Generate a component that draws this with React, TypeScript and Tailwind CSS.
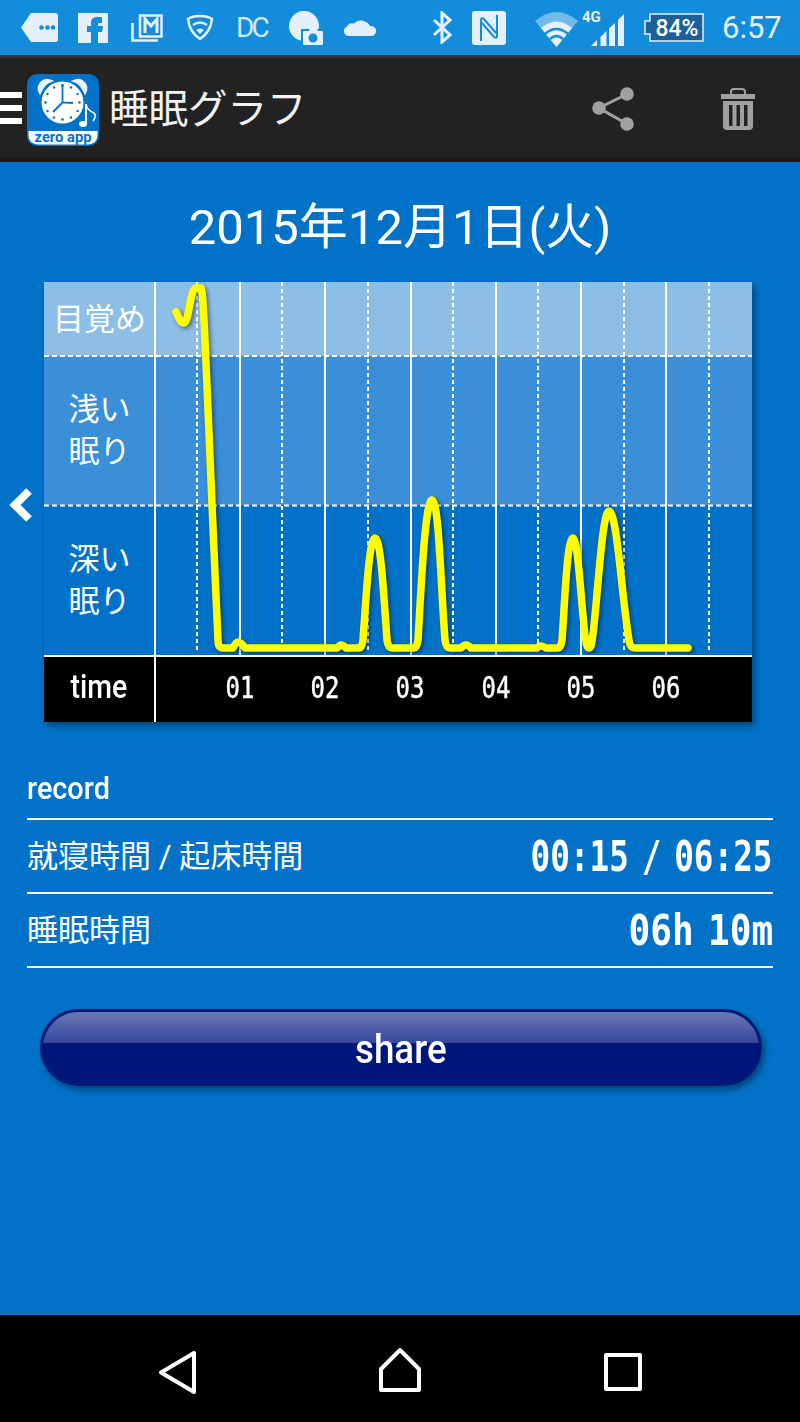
const statusIcon = '#e4f1fb';
const statusBg = '#148cdc';

const solidLines = [240, 325, 411, 496, 581, 666];
const dashedLines = [197, 282, 368, 453, 538, 624, 709];
const hours = ['01', '02', '03', '04', '05', '06'];

// sleep curve, in page coordinates (see viewBox on the svg)
const curve =
  'M176 312 C179 317 180 323 184 323 C189 323 190 288 196 288 L201 288 C204 288 207 400 218 640 Q218 648 223 648 L233 648 Q236 642 238 642 Q241 642 245 648 L337 648 Q340 645 341 645 Q343 645 346 648 L359 648 Q362 648 363 640 C366 600 369 538 375 538 C381 538 384 600 387 640 Q388 648 392 648 L414 648 Q417 648 418 640 C421 590 425 500 432 500 C439 500 441 590 445 640 Q446 648 450 648 L461 648 Q464 645 466 645 Q468 645 471 648 L537 648 Q539 646 541 646 Q543 646 546 648 L558 648 Q561 648 562 640 C565 600 567 538 573 538 C579 538 583 640 587 646 Q589 650 591 646 C596 630 601 511 609 511 C617 511 622 600 629 640 Q630 648 635 648 L688 648';

function StatusBar() {
  return (
    <div className="flex h-[55px] shrink-0 items-center bg-[#148cdc] text-[#e4f1fb]">
      <svg className="ml-[21px]" width="37" height="29" viewBox="0 0 37 29">
        <path d="M10 0H34a3 3 0 0 1 3 3V26a3 3 0 0 1-3 3H10L0 14.500Z" fill={statusIcon} />
        <circle cx="20.500" cy="14.500" r="2.300" fill={statusBg} />
        <circle cx="26.500" cy="14.500" r="2.300" fill={statusBg} />
        <circle cx="32" cy="14.500" r="2.300" fill={statusBg} />
      </svg>
      <svg className="ml-[20px]" width="30" height="30" viewBox="0 0 30 30">
        <rect width="30" height="30" fill={statusIcon} />
        <path d="M13 30V19H9V13H13V10Q13 4 19 4H24V10H21Q20 10 20 11V13H25L24 19H20V30Z" fill={statusBg} />
      </svg>
      <svg className="ml-[23px]" width="32" height="28" viewBox="0 0 32 28" fill="none" stroke={statusIcon}>
        <path d="M1.500 9V26.500H27" strokeWidth="2.500" />
        <rect x="9" y="1.500" width="21.500" height="21" strokeWidth="2.500" />
        <path d="M14 19V5L20 12L26 5V19" strokeWidth="3" />
      </svg>
      <svg className="ml-[23px]" width="28" height="27" viewBox="0 0 28 27" fill="none" stroke={statusIcon}>
        <path d="M14 2C9 2 5 3 2 5C3 14 8 21 14 25C20 21 25 14 26 5C23 3 19 2 14 2Z" strokeWidth="2.500" />
        <path d="M7 11Q14 6 21 11" strokeWidth="2.500" />
        <path d="M10 16Q14 13 18 16L14 20Z" fill={statusIcon} stroke="none" />
      </svg>
      <span className="ml-[22px] w-[34px] text-[28px] leading-none font-normal tracking-[-3px] text-[#d5e9f8]">DC</span>
      <svg className="ml-[19px]" width="35" height="36" viewBox="0 0 35 36">
        <circle cx="15" cy="16" r="15" fill={statusIcon} />
        <rect x="12" y="19" width="23" height="17" fill={statusBg} />
        <path d="M16 21H20L21 19H28L29 21H33Q34 21 34 22V34Q34 35 33 35H15Q14 35 14 34V22Q14 21 16 21Z" fill={statusIcon} />
        <circle cx="24" cy="28" r="4.500" fill={statusBg} />
      </svg>
      <svg className="ml-[19px]" width="34" height="17" viewBox="0 0 34 17">
        <path d="M5 17A5 5 0 0 1 4 7.500A6 6 0 0 1 11 4.500A10 10 0 0 1 27 7A5 5 0 0 1 29 17Z" fill={statusIcon} />
      </svg>
      <svg className="ml-[55px]" width="20" height="33" viewBox="0 0 20 33" fill="none" stroke={statusIcon} strokeWidth="3">
        <path d="M2 9L18 24L10 31V2L18 9L2 24" />
      </svg>
      <svg className="ml-[20px]" width="34" height="34" viewBox="0 0 34 34">
        <rect width="34" height="34" rx="3" fill={statusIcon} />
        <g fill="none" stroke={statusBg} strokeWidth="2">
          <path d="M9 30V9Q9 6 12 8L24 22" />
          <path d="M25 4V25Q25 28 22 26L10 12" />
        </g>
      </svg>
      <svg className="ml-[29px] mt-[4px]" width="43" height="35" viewBox="0 0 43 35">
        <path d="M0 9Q21.500 -9 43 9L21.500 35Z" fill={statusIcon} opacity="0.45" />
        <path d="M6 16Q21.500 3 37 16L21.500 35Z" fill={statusIcon} />
        <path d="M10 22Q21.500 12 33 22" fill="none" stroke={statusBg} strokeWidth="2.500" />
        <path d="M15 27Q21.500 21 28 27" fill="none" stroke={statusBg} strokeWidth="2.500" />
      </svg>
      <svg className="ml-[4px] mt-[-1px]" width="43" height="37" viewBox="0 0 43 37" fill={statusIcon}>
        <text x="0" y="13" fontSize="15" fontWeight="700" fontFamily="Roboto, sans-serif">4G</text>
        <path d="M9 37L15 31V37Z" />
        <path d="M18.500 28L24.500 22V37H18.500Z" />
        <path d="M27 19.500L33 14V37H27Z" />
        <path d="M36 11L42 5V37H36Z" />
      </svg>
      <svg className="ml-[19px]" width="60" height="29" viewBox="0 0 60 29">
        <path d="M6 1H59V28H6V21H1V8H6Z" fill="#1a6099" stroke={statusIcon} strokeWidth="1.500" />
        <text x="33" y="22.500" textAnchor="middle" fontSize="23" fontWeight="500" fill="#ffffff" fontFamily="Roboto, sans-serif">84%</text>
      </svg>
      <span className="ml-[18px] text-[31px] leading-none">6:57</span>
    </div>
  );
}

function AppLogo() {
  return (
    <svg width="72" height="72" viewBox="0 0 72 72">
      <rect width="72" height="72" rx="10" fill="#0272c9" />
      <path d="M1.500 57H70.500V60Q70.500 70.500 60 70.500H12Q1.500 70.500 1.500 60Z" fill="#ffffff" />
      <text x="36" y="68" textAnchor="middle" textLength="57" lengthAdjust="spacingAndGlyphs" fontSize="15" fontWeight="700" fill="#0272c9" fontFamily="Roboto, sans-serif">zero app</text>
      <path d="M13 18A8 8 0 0 1 23 7Q17 9 13 18Z" fill="#e8f2fa" stroke="#e8f2fa" strokeWidth="3" />
      <path d="M58 18A8 8 0 0 0 48 7Q54 9 58 18Z" fill="#e8f2fa" stroke="#e8f2fa" strokeWidth="3" />
      <circle cx="35.500" cy="28.500" r="21" fill="#ffffff" />
      <g fill="#0272c9">
        <circle cx="35.500" cy="11.500" r="1.300" />
        <circle cx="35.500" cy="45.500" r="1.300" />
        <circle cx="18.500" cy="28.500" r="1.300" />
        <circle cx="52.500" cy="28.500" r="1.300" />
        <circle cx="27" cy="13.500" r="1.200" />
        <circle cx="44" cy="13.500" r="1.200" />
        <circle cx="27" cy="43.500" r="1.200" />
        <circle cx="44" cy="43.500" r="1.200" />
        <circle cx="20.500" cy="20" r="1.200" />
        <circle cx="50.500" cy="20" r="1.200" />
        <circle cx="20.500" cy="37" r="1.200" />
        <circle cx="50.500" cy="37" r="1.200" />
      </g>
      <path d="M35.500 10V28.500L46 29M35.500 28.500L26 38" fill="none" stroke="#0272c9" strokeWidth="1.800" />
      <path d="M59 30V50" stroke="#ffffff" strokeWidth="2" />
      <ellipse cx="56" cy="50" rx="4" ry="3" fill="#ffffff" />
      <path d="M59 30Q60 36 67 39Q70 42 66 47" fill="none" stroke="#ffffff" strokeWidth="1.500" />
    </svg>
  );
}

function Toolbar() {
  return (
    <div className="flex h-[107px] shrink-0 items-center border-t-[3px] border-b-[4px] border-t-[#333333] border-b-[#1a1a1a] bg-[#222222]">
      <div className="flex w-[22px] flex-col gap-[7px]">
        <div className="h-[6px] bg-white" />
        <div className="h-[6px] bg-white" />
        <div className="h-[6px] bg-white" />
      </div>
      <div className="ml-[5px] mt-[4px]">
        <AppLogo />
      </div>
      <h1 className="ml-[10px] w-[196px] pt-[3px] text-[39.500px] leading-none font-normal whitespace-nowrap text-[#f2f2f2]">睡眠グラフ</h1>
      <svg className="ml-[287px] mt-[2px]" width="42" height="44" viewBox="0 0 42 44" fill="#a0a0a0">
        <path d="M35 7L7 21L35 37" fill="none" stroke="#a0a0a0" strokeWidth="3" />
        <circle cx="35" cy="7" r="6.800" />
        <circle cx="7" cy="21" r="6.800" />
        <circle cx="35" cy="37" r="6.800" />
      </svg>
      <svg className="ml-[87px] mt-[2px]" width="34" height="42" viewBox="0 0 34 42">
        <path d="M10 7V4Q10 1 13 1H21Q24 1 24 4V7" fill="none" stroke="#a0a0a0" strokeWidth="2" />
        <path d="M0 6H34V11H0Z" fill="#a0a0a0" />
        <path d="M2 13H32V38Q32 42 28 42H6Q2 42 2 38Z" fill="#a0a0a0" />
        <g fill="#222222">
          <rect x="8" y="17" width="3.500" height="21" />
          <rect x="15.500" y="17" width="3.500" height="21" />
          <rect x="23" y="17" width="3.500" height="21" />
        </g>
      </svg>
    </div>
  );
}

function SleepChart() {
  return (
    <div className="w-[708px] shrink-0 shadow-[3px_4px_7px_rgba(0,0,0,0.4)]">
      <div className="relative text-[31px] leading-[42px] text-white">
        <div className="flex h-[74px] items-center bg-[#8dbee6]">
          <div className="w-[111px] pt-[1px] text-center">目覚め</div>
        </div>
        <div className="flex h-[149px] items-center bg-[#3a8fd8]">
          <div className="w-[111px] pt-[1px] text-center">浅い<br />眠り</div>
        </div>
        <div className="flex h-[150px] items-center bg-[#0272c9]">
          <div className="w-[111px] pt-[2px] text-center">深い<br />眠り</div>
        </div>
        <svg className="absolute inset-0" width="708" height="373" viewBox="44 282 708 373" fill="none">
          <path d="M44 356H752M44 505.500H752" stroke="#ffffff" strokeWidth="2" strokeDasharray="5 3" />
          {dashedLines.map((x) => (
            <path key={x} d={`M${x} 282V650`} stroke="#ffffff" strokeWidth="2" strokeDasharray="4 3" />
          ))}
          <path d="M155 282V655" stroke="#ffffff" strokeWidth="2" />
          {solidLines.map((x) => (
            <path key={x} d={`M${x} 282V655`} stroke="#ffffff" strokeWidth="2" />
          ))}
          <path
            d={curve}
            stroke="#ffff00"
            strokeWidth="7.500"
            strokeLinecap="round"
            strokeLinejoin="round"
            className="drop-shadow-[2px_2px_2px_rgba(0,0,0,0.45)]"
          />
        </svg>
      </div>
      <div className="h-[2px] bg-white" />
      <div className="flex h-[65px] items-center bg-black font-['DejaVu_Sans_Mono',monospace] text-[30px] text-white">
        <div className="flex h-full w-[112px] items-center justify-center border-r-2 border-white pb-[5px] font-['Roboto',sans-serif] text-[33px] font-medium">
          <span className="inline-block scale-x-[0.86]">time</span>
        </div>
        <div className="flex pb-[4px] pl-[41px]">
          {hours.map((h) => (
            <div key={h} className="w-[85.330px] text-center">
              <span className="inline-block scale-x-[0.8] [-webkit-text-stroke:0.5px_white]">{h}</span>
            </div>
          ))}
        </div>
      </div>
    </div>
  );
}

export default function App() {
  return (
    <div className="flex h-[1422px] w-[800px] flex-col overflow-hidden bg-[#0272c9] font-['Roboto','Noto_Sans_CJK_JP',sans-serif] text-white">
      <StatusBar />
      <Toolbar />

      <div className="flex-1">
        <h2 className="mt-[37px] h-[83px] text-center text-[49px] leading-[58px] font-normal">2015年12月1日(火)</h2>

        <div className="flex">
          <div className="flex w-[44px] items-center justify-center pr-[2px] pt-[6px]">
            <svg width="26" height="34" viewBox="0 0 26 34" fill="none" stroke="#ffffff" strokeWidth="8">
              <path d="M21 3L7 17L21 31" />
            </svg>
          </div>
          <SleepChart />
        </div>

        <div className="mx-[27px]">
          <div className="flex h-[98px] items-end border-b-2 border-white pb-[10px] text-[32px] leading-[40px] font-medium">
            <span className="inline-block origin-left scale-x-[0.9]">record</span>
          </div>
          <div className="flex h-[74px] items-center justify-between border-b-2 border-white text-[31px]">
            <span className="pt-[3px]">就寝時間 / 起床時間</span>
            <span className="inline-block origin-right scale-x-[0.76] font-['DejaVu_Sans_Mono',monospace] text-[43px] font-bold [word-spacing:-9px]">00:15 / 06:25</span>
          </div>
          <div className="flex h-[74px] items-center justify-between border-b-2 border-white text-[31px]">
            <span className="pt-[3px]">睡眠時間</span>
            <span className="inline-block origin-right scale-x-[0.84] font-['DejaVu_Sans_Mono',monospace] text-[43px] font-bold [word-spacing:-9px]">06h 10m</span>
          </div>
        </div>

        <button className="mx-[40px] mt-[41px] flex h-[77px] w-[722px] items-center justify-center rounded-full border-[3px] border-[#001a78] bg-[linear-gradient(to_bottom,#6b78b5_0%,#36469a_44%,#00167a_44%,#00167a_100%)] pt-[5px] text-[40px] font-medium text-white shadow-[3px_4px_6px_rgba(0,0,0,0.4)]">
          <span className="inline-block scale-x-[0.92]">share</span>
        </button>
      </div>

      <div className="flex h-[107px] shrink-0 items-center bg-black">
        <svg className="ml-[157px] mt-[8px]" width="41" height="45" viewBox="0 0 41 45" fill="none" stroke="#ffffff" strokeWidth="4" strokeLinejoin="round">
          <path d="M37 3V42L4 22.500Z" />
        </svg>
        <svg className="ml-[179px] mt-[3px]" width="46" height="46" viewBox="0 0 46 46" fill="none" stroke="#ffffff" strokeWidth="4" strokeLinejoin="round">
          <path d="M23 3L42 22V43H4V22Z" />
        </svg>
        <svg className="ml-[181px] mt-[7px]" width="38" height="38" viewBox="0 0 38 38" fill="none" stroke="#ffffff" strokeWidth="4" strokeLinejoin="round">
          <rect x="2" y="2" width="34" height="34" />
        </svg>
      </div>
    </div>
  );
}
